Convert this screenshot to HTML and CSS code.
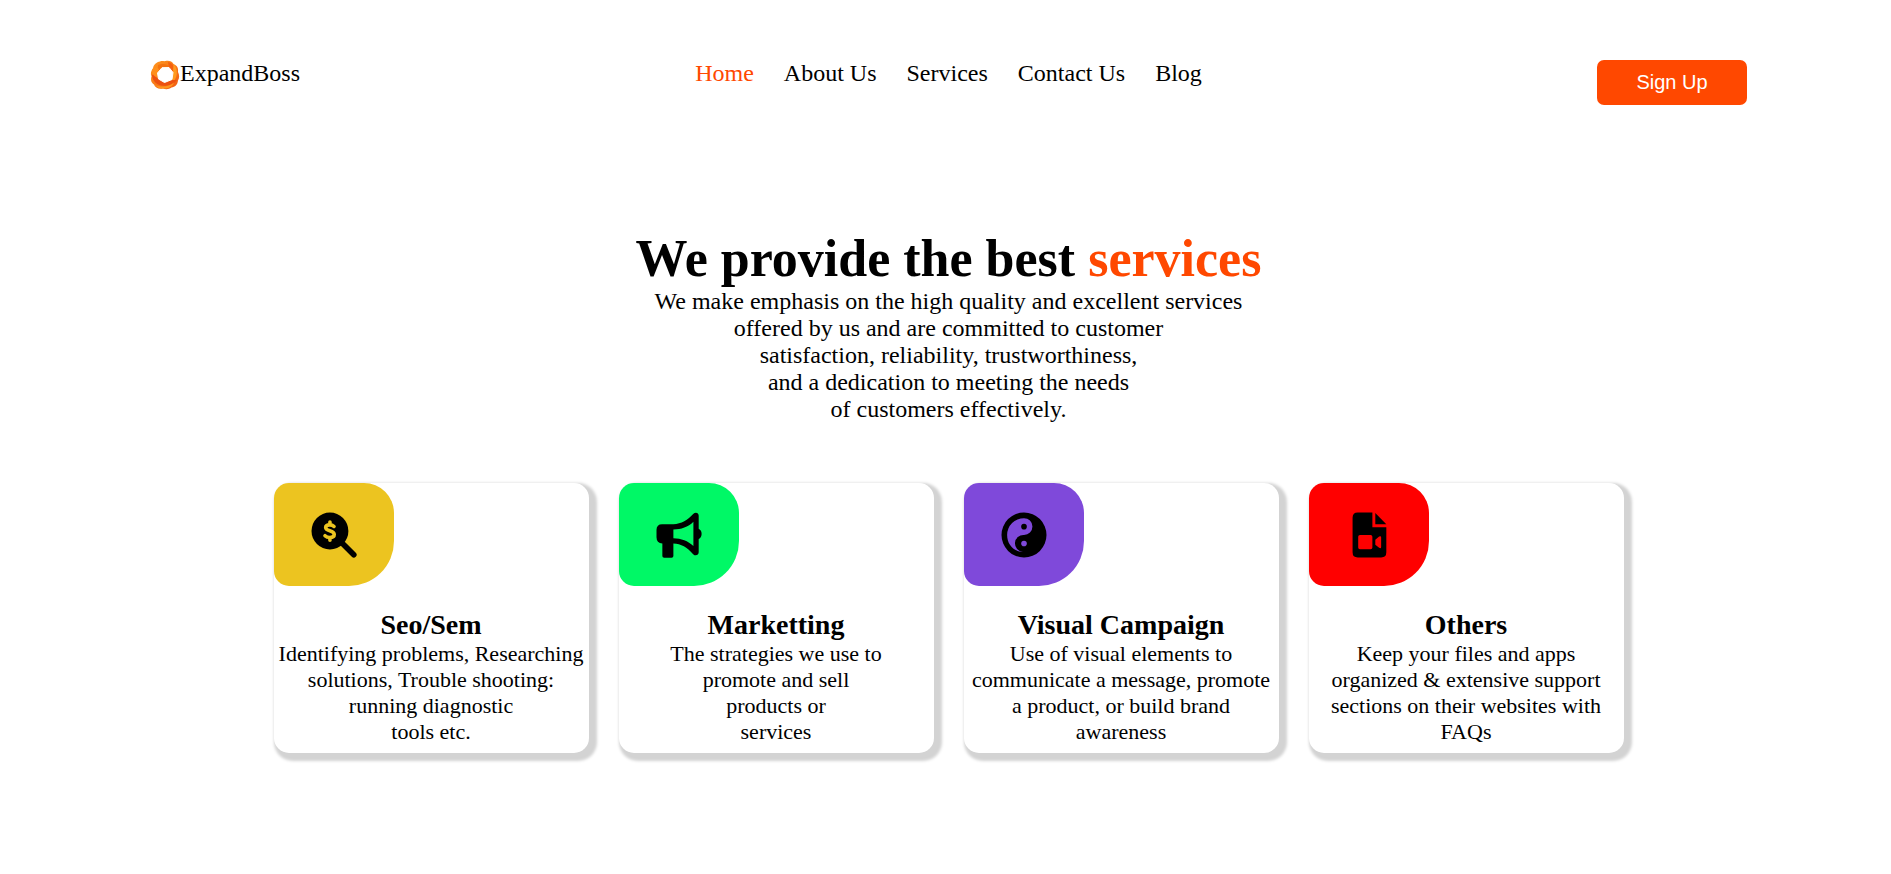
FILE: index.html
```html
<!DOCTYPE html>
<html lang="en">
<head>
<meta charset="utf-8">
<title>ExpandBoss</title>
<link rel="stylesheet" href="styles.css">
</head>
<body>
<header class="header">
  <a class="brand" href="#">
    <svg class="brand-mark" viewBox="0 0 30 30" aria-hidden="true">
      <defs>
        <linearGradient id="flame" x1="0" y1="0" x2="1" y2="1">
          <stop offset="0" stop-color="#ff981e"/>
          <stop offset="1" stop-color="#f05a12"/>
        </linearGradient>
      </defs>
      <path fill="url(#flame)" d="M10 1.500C12 .5 14 1.500 15.500 1C19 .3 22 1.200 23.500 4C27.500 5.500 28.500 8.500 28 12C29.500 15 29.500 18 28 20.500C27.500 25 25 27 21.500 27.500C19 29.500 15.500 29.500 13 28.500C8.500 29.500 5 27.500 4 24.500C1 22.500 .5 19.500 1.500 16.500C.2 13.500 1 10.500 3 8.500C3.500 4.500 6.500 2 10 1.500Z"/>
      <path fill="#f4730f" d="M8 5C13 3 18 4 21 8L13 8L8 12Z"/>
      <path fill="#f4600f" d="M18 2C23 3 27 9 26 15L23 19L22 12L19 8Z"/>
      <path fill="#ff9a1e" d="M23.500 4C28.500 9 28 19 21.500 23L22.500 18L23 12Z"/>
      <path fill="#ec5010" d="M2 15C2 22 9 27 17 25.500C21 25 25 23 27 20L22 20L14 22L8 18L7.500 12Z"/>
      <path fill="#ff8f1b" d="M2 10C3.500 7 6 7 9 9L7.500 14L8 18C5 17 2 15 2 10Z"/>
      <path fill="#ff961d" d="M4 24.500C11 28 19 27 24 22.500C22 28 16 29.500 9 28Z"/>
      <path fill="#fff" d="M12 7.700L19 7.500L23 12.500L22 19.500L14.500 22.500L8.500 19L7.500 13Z" stroke="#fff" stroke-width="1" stroke-linejoin="round"/>
    </svg>
    <span>ExpandBoss</span>
  </a>
  <nav class="nav">
    <a class="nav-link active" href="#">Home</a>
    <a class="nav-link" href="#">About Us</a>
    <a class="nav-link" href="#">Services</a>
    <a class="nav-link" href="#">Contact Us</a>
    <a class="nav-link" href="#">Blog</a>
  </nav>
  <button class="signup" type="button">Sign Up</button>
</header>
<main>
  <section class="hero">
    <h1 class="hero-title">We provide the best <span class="accent">services</span></h1>
    <p class="hero-text">We make emphasis on the high quality and excellent services<br>offered by us and are committed to customer<br>satisfaction, reliability, trustworthiness,<br>and a dedication to meeting the needs<br>of customers effectively.</p>
  </section>
  <section class="cards">
    <article class="card">
      <div class="tile yellow">
        <svg class="icon" viewBox="0 0 24 24" aria-hidden="true">
          <circle cx="10.200" cy="10.200" r="8.200"/>
          <path d="M15 15L20.800 20.800" stroke="#000" stroke-width="2.500" stroke-linecap="round"/>
          <path d="M12 8.200C11.400 7.600 10.800 7.500 10.100 7.500C9 7.500 8.300 8 8.300 8.700C8.300 10.600 12.100 9.700 12.100 11.800C12.100 12.600 11.300 13.100 10.200 13.100C9.300 13.100 8.600 12.900 8 12.300M10.200 6.200V7.500M10.200 13.100V14.300" fill="none" stroke="#ecc420" stroke-width="1.600" stroke-linecap="round" stroke-linejoin="round"/>
        </svg>
      </div>
      <h2 class="card-title">Seo/Sem</h2>
      <p class="card-text">Identifying problems, Researching<br>solutions, Trouble shooting:<br>running diagnostic<br>tools etc.</p>
    </article>
    <article class="card">
      <div class="tile green">
        <svg class="icon" viewBox="0 0 24 24" aria-hidden="true">
          <path fill-rule="evenodd" d="M4.500 7.200H9.500C13 7.200 16 5.200 18.300 2.700C19.200 1.700 20.750 2 20.750 3.400V9.200C22.500 10 22.500 13 20.750 13.800V19.700C20.750 21.100 19.200 21.500 18.300 20.500C15.500 17.500 13 15.900 9.500 15.800V21.300Q9.500 22.100 8.700 22.100H5.400Q4.600 22.100 4.600 21.300V15.800Q2 15.500 2 13V9.700Q2 7.200 4.500 7.200ZM9.500 9.500V13.400C13 13.500 16 14.500 18.400 16.900V6.100C16 8.500 13 9.500 9.500 9.500Z"/>
        </svg>
      </div>
      <h2 class="card-title">Marketting</h2>
      <p class="card-text">The strategies we use to<br>promote and sell<br>products or<br>services</p>
    </article>
    <article class="card">
      <div class="tile purple">
        <svg class="icon" viewBox="0 0 24 24" aria-hidden="true">
          <path fill-rule="evenodd" d="M12 2A10 10 0 1 1 12 22A10 10 0 1 1 12 2ZM12 4.500A7.500 7.500 0 0 0 4.500 12C4.500 16.200 7.500 19.500 11.500 19.500A3.750 3.750 0 0 1 12 12A3.750 3.750 0 0 0 12 4.500Z"/>
          <circle cx="12" cy="8.300" r="1.250"/>
          <circle cx="12" cy="15.750" r="1.250" fill="#7f49da"/>
        </svg>
      </div>
      <h2 class="card-title">Visual Campaign</h2>
      <p class="card-text">Use of visual elements to<br>communicate a message, promote<br>a product, or build brand<br>awareness</p>
    </article>
    <article class="card">
      <div class="tile red">
        <svg class="icon" viewBox="0 0 24 24" aria-hidden="true">
          <path fill-rule="evenodd" d="M7 2H13.500V8.500H19.700V19.700Q19.700 22 17.400 22H7Q4.700 22 4.700 19.700V4.300Q4.700 2 7 2ZM8 12Q7.200 12 7.200 12.800V17.500Q7.200 18.300 8 18.300H12.700Q13.500 18.300 13.500 17.500V12.800Q13.500 12 12.700 12ZM14.800 14.100V16.300L16.500 17.700Q17.400 18.200 17.400 17.300V13.100Q17.400 12.200 16.500 12.700Z"/>
          <path d="M14.800 2.200L19.700 7.200H14.800Z"/>
        </svg>
      </div>
      <h2 class="card-title">Others</h2>
      <p class="card-text">Keep your files and apps<br>organized &amp; extensive support<br>sections on their websites with<br>FAQs</p>
    </article>
  </section>
</main>
</body>
</html>
```
FILE: styles.css
```css
* {
  box-sizing: border-box;
  margin: 0;
  padding: 0;
}

body {
  padding: 60px 144px 60px 150px;
  background: #fff;
  color: #000;
  font-family: "Liberation Serif", "Times New Roman", serif;
  font-size: 24px;
  line-height: 27px;
}

a {
  color: inherit;
  text-decoration: none;
}

.header {
  display: flex;
  justify-content: space-between;
  align-items: flex-start;
}

.brand,
.nav {
  display: flex;
}

.brand-mark {
  width: 30px;
  height: 30px;
}

.nav {
  gap: 30px;
}

.nav-link.active,
.accent {
  color: #ff4800;
}

.signup {
  width: 150px;
  height: 45px;
  border: none;
  border-radius: 7px;
  background: #ff4800;
  color: #fff;
  font-family: "Liberation Sans", Arial, sans-serif;
  font-size: 20px;
}

.hero {
  margin-top: 125px;
  text-align: center;
}

.hero-title {
  font-size: 52px;
  line-height: 58px;
}

.cards {
  display: grid;
  grid-template-columns: repeat(auto-fit, 315px);
  justify-content: center;
  gap: 30px;
  margin-top: 60px;
}

.card {
  padding-bottom: 8px;
  border-radius: 15px;
  background: #fff;
  box-shadow: 4px 4px 3px 4px #d3d3d3;
  text-align: center;
}

.tile {
  display: flex;
  align-items: center;
  justify-content: center;
  width: 120px;
  height: 103px;
  margin-bottom: 22px;
  border-radius: 15px 30px 45px 15px;
}

.icon {
  width: 54px;
  height: 54px;
}

.yellow {
  background: #ecc420;
}

.green {
  background: #00f866;
}

.purple {
  background: #7f49da;
}

.red {
  background: #f00;
}

.card-title {
  font-size: 28px;
  line-height: 33px;
}

.card-text {
  font-size: 22px;
  line-height: 26px;
}
```
